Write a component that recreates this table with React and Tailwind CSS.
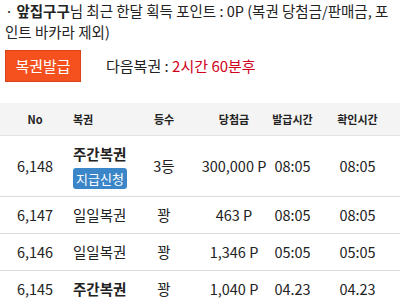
const rows = [
  { no: "6,148", name: "주간복권", bold: true, badge: true, rank: "3등", prize: "300,000 P", issued: "08:05", checked: "08:05" },
  { no: "6,147", name: "일일복권", rank: "꽝", prize: "463 P", issued: "08:05", checked: "08:05" },
  { no: "6,146", name: "일일복권", rank: "꽝", prize: "1,346 P", issued: "05:05", checked: "05:05" },
  { no: "6,145", name: "주간복권", bold: true, rank: "꽝", prize: "1,040 P", issued: "04.23", checked: "04.23" },
];

const cols = "grid grid-cols-[70px_60px_68px_72px_45px_85px]";

export default function App() {
  return (
    <div className="w-[400px] h-[300px] overflow-hidden bg-white text-[#222] font-['Noto_Sans_CJK_KR','Noto_Sans',sans-serif]">
      {/* summary */}
      <p className="pl-[5px] pr-[4px] text-[14.5px] leading-[21px] break-all">
        · <b>앞집구구</b>님 최근 한달 획득 포인트 : 0P (복권 당첨금/판매금, 포인트 바카라 제외)
      </p>

      <div className="flex items-center mt-[8px] px-[5px]">
        <button className="w-[76px] h-[32px] bg-[#f4511e] border border-[#d9441a] text-white text-[15px]">
          복권발급
        </button>
        <span className="ml-[25px] text-[15px]">
          다음복권 : <span className="text-[#d0021b]">2시간 60분후</span>
        </span>
      </div>

      {/* table */}
      <div className="mt-[21px]">
        <div className={`${cols} h-[33px] items-center bg-[#f4f4f4] border-b border-[#e2e2e2] text-[11px] font-bold`}>
          <div className="text-center">No</div>
          <div className="pl-[3px]">복권</div>
          <div className="text-center">등수</div>
          <div className="text-center">당첨금</div>
          <div className="text-center">발급시간</div>
          <div className="text-center">확인시간</div>
        </div>
        {rows.map((r) => (
          <div
            key={r.no}
            className={`${cols} items-center border-b border-[#dcdcdc] text-[14.5px] ${r.badge ? "h-[61px]" : "h-[37px]"}`}
          >
            <div className="text-center">{r.no}</div>
            <div className="pl-[3px] flex flex-col items-start">
              <span className={r.bold ? "font-bold" : ""}>{r.name}</span>
              {r.badge && (
                <span className="mt-[3px] px-[3px] h-[21px] leading-[21px] rounded-[3px] bg-[#3a86c8] text-white text-[13px] whitespace-nowrap">
                  지급신청
                </span>
              )}
            </div>
            <div className="text-center">{r.rank}</div>
            <div className="text-center whitespace-nowrap">{r.prize}</div>
            <div className="text-center">{r.issued}</div>
            <div className="text-center">{r.checked}</div>
          </div>
        ))}
      </div>
    </div>
  );
}
